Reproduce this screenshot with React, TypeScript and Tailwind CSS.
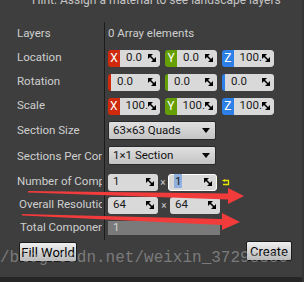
import React from "react";

const Spin = () => (
  <svg width="8" height="8" viewBox="0 0 8 8" className="shrink-0">
    <polygon points="0,0 5,0 0,5" fill="#000" />
    <polygon points="8,8 3,8 8,3" fill="#000" />
    <line x1="1" y1="1" x2="7" y2="7" stroke="#000" strokeWidth="1.6" />
  </svg>
);

const Vec = ({ l, c, v }: { l: string; c: string; v: string }) => (
  <div className="w-[52px] h-[17px] rounded-[3px] overflow-hidden flex">
    <div className={`w-[12px] h-full flex items-center justify-center text-white text-[12px] ${c}`}>{l}</div>
    <div className="flex-1 bg-[#d9d9d9] flex items-center pl-[6px] pr-[4px] rounded-r-[3px] text-[#1a1a1a] text-[11.5px]">
      <span className="flex-1 overflow-hidden whitespace-nowrap">{v}</span>
      <Spin />
    </div>
  </div>
);

const Rot = ({ c, v }: { c: string; v: string }) => (
  <div className="w-[52px] h-[17px] rounded-[3px] overflow-hidden flex">
    <div className={`w-[3px] h-full ${c}`} />
    <div className="flex-1 bg-[#d9d9d9] flex items-center pl-[6px] pr-[4px] text-[#1a1a1a] text-[11.5px]">
      <span className="flex-1">{v}</span>
      <Spin />
    </div>
  </div>
);

const Row = ({ label, h, pl = "pl-[17px]", children }: { label: string; h: string; pl?: string; children?: React.ReactNode }) => (
  <div className={`flex ${h}`}>
    <div className={`w-[105px] shrink-0 border-r border-[#1c1c1c] flex items-center ${pl} pr-[2px] overflow-hidden`}>
      <span className="whitespace-nowrap overflow-hidden text-[11.5px] text-[#cfcfcf]">{label}</span>
    </div>
    <div className="flex-1 flex items-center pl-[3px]">{children}</div>
  </div>
);

const Drop = ({ v, top }: { v: string; top?: string }) => (
  <div className={`w-[108px] h-[19px] rounded-[2px] border border-[#2a2a2a] bg-gradient-to-b from-[#e0e0e0] to-[#c4c4c4] flex items-center pl-[4px] pr-[5px] text-[11.5px] text-[#111] ${top ?? ""}`}>
    <span className="flex-1">{v}</span>
    <svg width="8" height="5" viewBox="0 0 8 5">
      <polygon points="0,0 8,0 4,5" fill="#000" />
    </svg>
  </div>
);

const Num = ({ v, focus, w = "w-[50px]" }: { v: string; focus?: boolean; w?: string }) => (
  <div className={`${w} h-[17px] rounded-[3px] bg-[#d9d9d9] flex items-center pl-[5px] pr-[4px] text-[11.5px] text-[#1a1a1a] ${focus ? "border border-white" : ""}`}>
    <span className="flex-1">
      {focus ? <span className="bg-[#8fb0dc] px-[1px]">{v}</span> : v}
    </span>
    <Spin />
  </div>
);

export default function App() {
  return (
    <div className="w-[304px] h-[282px] bg-[#3e3e3e] relative overflow-hidden flex flex-col border-r-2 border-[#353535]" style={{ fontFamily: "Roboto, 'Liberation Sans', sans-serif" }}>
      <div className="h-[22px] shrink-0">
        <div className="-mt-[7px] pl-[32px] whitespace-nowrap text-[12px] leading-[14px] text-[#c4c4c4]">
          Hint: Assign a material to see landscape layers
        </div>
      </div>
      <Row label="Layers" h="h-[24px]">
        <span className="text-[11.5px] text-[#cfcfcf]">0 Array elements</span>
      </Row>
      <Row label="Location" h="h-[24px]">
        <div className="flex gap-[5px]">
          <Vec l="X" c="bg-[#cf2a0c]" v="0.0" />
          <Vec l="Y" c="bg-[#66a000]" v="0.0" />
          <Vec l="Z" c="bg-[#2f7fe8]" v="100." />
        </div>
      </Row>
      <Row label="Rotation" h="h-[24px]">
        <div className="flex gap-[5px]">
          <Rot c="bg-[#cf2a0c]" v="0.0" />
          <Rot c="bg-[#66a000]" v="0.0" />
          <Rot c="bg-[#2f7fe8]" v="0.0" />
        </div>
      </Row>
      <Row label="Scale" h="h-[24px]">
        <div className="flex gap-[5px]">
          <Vec l="X" c="bg-[#cf2a0c]" v="100." />
          <Vec l="Y" c="bg-[#66a000]" v="100." />
          <Vec l="Z" c="bg-[#2f7fe8]" v="100." />
        </div>
      </Row>
      <Row label="Section Size" h="h-[26px]">
        <Drop v="63×63 Quads" top="-mt-[1px]" />
      </Row>
      <Row label="Sections Per Component" h="h-[26px]">
        <Drop v="1×1 Section" top="-mt-[3px]" />
      </Row>
      <Row label="Number of Components" h="h-[24px]">
        <div className="flex items-center">
          <Num v="1" />
          <span className="w-[10px] text-center text-[10px] text-[#cfcfcf]">×</span>
          <Num v="1" focus w="w-[49px]" />
          <svg width="8" height="8" viewBox="0 0 8 8" className="ml-[5px] mt-[1px]">
            <polyline points="3,1.5 6.5,1.5 6.5,5.5 1,5.5" fill="none" stroke="#e6e600" strokeWidth="1.3" />
            <polygon points="0,1.5 3,0 3,3" fill="#e6e600" />
          </svg>
        </div>
      </Row>
      <Row label="Overall Resolution" h="h-[22px]" pl="pl-[19px]">
        <div className="flex items-center">
          <Num v="64" />
          <span className="w-[12px] text-center text-[10px] text-[#cfcfcf]">×</span>
          <Num v="64" />
        </div>
      </Row>
      <Row label="Total Components" h="h-[24px]" pl="pl-[20px]">
        <div className="w-[112px] h-[14px] bg-[#7a7a7a] flex items-center pl-[5px] text-[11.5px] text-[#d4d4d4]">1</div>
      </Row>
      <div className="flex justify-between items-start pl-[19px] pr-[10px] mt-[1px]">
        <button className="w-[58px] h-[20px] mt-[1px] rounded-[2px] border border-[#1c1c1c] bg-gradient-to-b from-[#f0f0f0] to-[#bababa] text-[13px] text-black leading-none">Fill World</button>
        <button className="w-[46px] h-[20px] rounded-[2px] border border-[#1c1c1c] bg-gradient-to-b from-[#f0f0f0] to-[#bababa] text-[13px] text-black leading-none">Create</button>
      </div>
      <div className="mt-auto h-[5px] bg-[#262626]" />
      <div className="absolute left-0 top-[248px] whitespace-nowrap text-[16px] leading-[20px] text-[rgba(200,200,200,0.45)] pointer-events-none" style={{ fontFamily: "'Liberation Mono', monospace" }}>
        /blog.csdn.net/weixin_37298380
      </div>
      <svg className="absolute left-0 top-0 pointer-events-none" width="304" height="282">
        <polygon points="28,191 228,193.5 228,188 244,196 228,204 228,199.5 28,192.5" fill="#f23b3b" />
        <polygon points="22,214 222,219 222,213 240,222 222,230 222,225 22,215.5" fill="#f23b3b" />
      </svg>
    </div>
  );
}
